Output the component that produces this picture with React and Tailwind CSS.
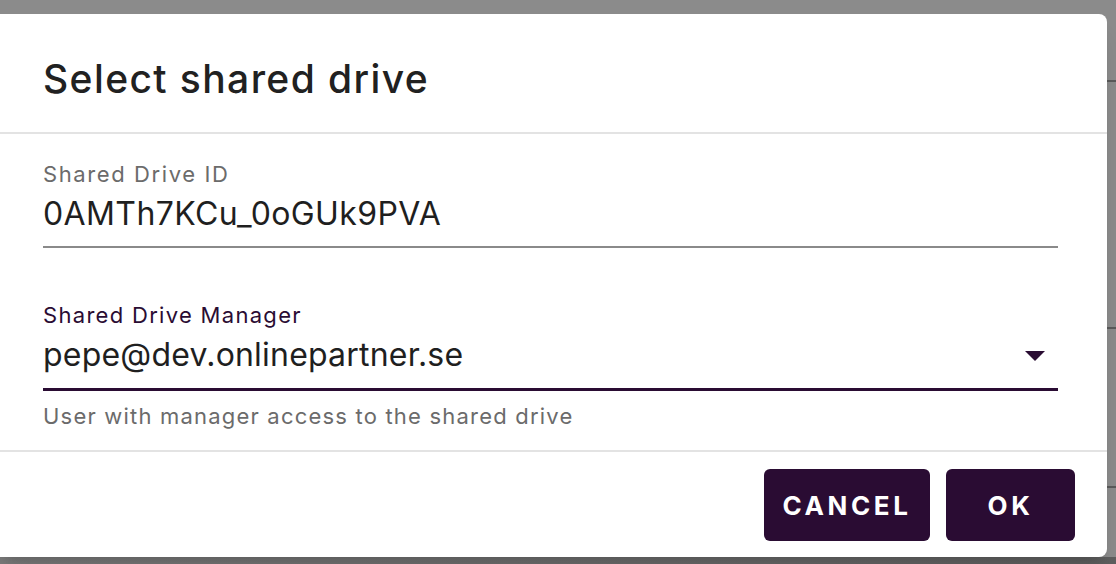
import React from "react";

const font = { fontFamily: "Inter, 'Noto Sans', sans-serif" };

const App = () => {
  return (
    <div className="relative h-[564px] w-full overflow-hidden bg-[#8b8b8b]" style={font}>
      {/* page behind the backdrop */}
      <div className="absolute right-0 top-[80px] h-[2px] w-[12px] bg-[#5a5a5a]" />
      <div className="absolute right-0 top-[327px] h-[2px] w-[12px] bg-[#5a5a5a]" />
      <div className="absolute right-0 top-[486px] h-[2px] w-[12px] bg-[#5a5a5a]" />
      <div className="absolute bottom-0 left-0 h-[7px] w-full bg-gradient-to-r from-[#7a7a7a] to-[#5e5e5e]" />

      <div className="absolute left-0 top-[14px] flex h-[543px] w-[1107px] flex-col rounded-r-lg bg-white shadow-xl">
        <div className="flex h-[118px] items-center px-[43px] pt-[13px]">
          <h2 className="text-[39px] font-medium tracking-[1.4px] text-[#212121]">Select shared drive</h2>
        </div>
        <div className="h-[2px] bg-[#e3e3e3]" />

        <div className="flex flex-1 flex-col px-[43px] pr-[49px] pt-[26px]">
          <label className="text-[22px] leading-[28px] tracking-[1.6px] text-[#6b6b6b]">Shared Drive ID</label>
          <div className="flex h-[60px] items-center border-b-[2px] border-[#8a8a8a] pb-[6px]">
            <span className="text-[32px] tracking-[0.4px] text-[#1f1f1f]">0AMTh7KCu_0oGUk9PVA</span>
          </div>

          <label className="mt-[53px] text-[22px] leading-[28px] tracking-[1.3px] text-[#2a0c33]">
            Shared Drive Manager
          </label>
          <div className="flex h-[62px] items-center justify-between border-b-[3px] border-[#2a0c33] pb-[8px]">
            <span className="text-[32px] tracking-[0.2px] text-[#1f1f1f]">pepe@dev.onlinepartner.se</span>
            <svg width="20" height="10" viewBox="0 0 20 10" className="mr-[13px] mt-[2px]">
              <path d="M0 0 L20 0 L10 10 Z" fill="#2a0c33" />
            </svg>
          </div>
          <p className="mt-[11px] text-[22px] leading-[28px] tracking-[1.2px] text-[#6b6b6b]">
            User with manager access to the shared drive
          </p>
        </div>

        <div className="h-[2px] bg-[#e3e3e3]" />
        <div className="flex h-[105px] items-start justify-end gap-[16px] pr-[32px] pt-[17px]">
          <button className="h-[72px] w-[166px] rounded-[6px] bg-[#2a0c33] text-[26px] font-bold tracking-[3.6px] text-white">
            CANCEL
          </button>
          <button className="h-[72px] w-[129px] rounded-[6px] bg-[#2a0c33] text-[26px] font-bold tracking-[3.6px] text-white">
            OK
          </button>
        </div>
      </div>
    </div>
  );
};

export default App;
